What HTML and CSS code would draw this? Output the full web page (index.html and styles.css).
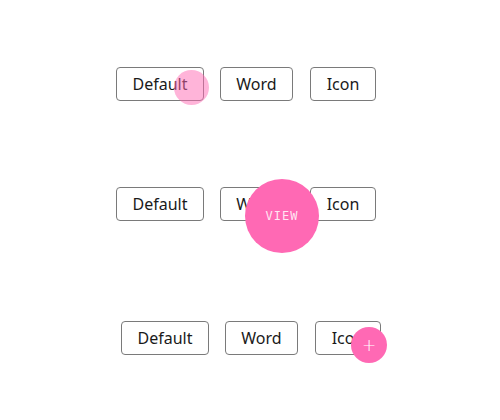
FILE: index.html
```html
<!DOCTYPE html>
<html>
<head>
<meta charset="utf-8">
<link rel="stylesheet" href="styles.css">
</head>
<body>
<div class="page">
  <div class="row row-1">
    <button class="btn btn-default">Default</button>
    <button class="btn btn-word">Word</button>
    <button class="btn btn-icon">Icon</button>
    <span class="ripple"></span>
  </div>
  <div class="row row-2">
    <button class="btn btn-default">Default</button>
    <button class="btn btn-word">Word</button>
    <button class="btn btn-icon">Icon</button>
    <span class="view">VIEW</span>
  </div>
  <div class="row row-3">
    <button class="btn btn-default">Default</button>
    <button class="btn btn-word">Word</button>
    <button class="btn btn-icon">Icon</button>
    <span class="fab">+</span>
  </div>
</div>
</body>
</html>
```
FILE: styles.css
```css
html, body {
  margin: 0;
  padding: 0;
  background: #ffffff;
}
.page {
  width: 500px;
  height: 420px;
  padding-top: 67px;
  box-sizing: border-box;
  font-family: "Noto Sans", "Open Sans", sans-serif;
}
.row {
  position: relative;
  display: flex;
  gap: 16px;
  height: 34px;
}
.row-1 { padding-left: 116px; }
.row-2 { padding-left: 116px; margin-top: 86px; }
.row-3 { padding-left: 121px; margin-top: 100px; }
.btn {
  height: 34px;
  box-sizing: border-box;
  border: 1px solid #7a7a7a;
  border-radius: 4px;
  background: #fff;
  color: #1a1a1a;
  font-family: inherit;
  font-size: 16px;
  padding: 1px 0 0;
  line-height: 31px;
  margin: 0;
  text-align: center;
}
.btn-default { width: 88px; }
.btn-word { width: 73px; margin-left: 0; }
.btn-icon { width: 66px; margin-left: 1px; }
.ripple {
  position: absolute;
  left: 174px;
  top: 3px;
  width: 35px;
  height: 35px;
  border-radius: 50%;
  background: rgba(255, 105, 180, 0.5);
}
.view {
  position: absolute;
  left: 245px;
  top: -8px;
  width: 74px;
  height: 74px;
  border-radius: 50%;
  background: #ff69b4;
  color: rgba(255, 255, 255, 0.85);
  font-family: "DejaVu Sans Mono", monospace;
  font-size: 12px;
  letter-spacing: 1px;
  display: flex;
  align-items: center;
  justify-content: center;
}
.fab {
  position: absolute;
  left: 351px;
  top: 6px;
  width: 36px;
  height: 36px;
  border-radius: 50%;
  background: #ff69b4;
  color: #fff;
  font-family: "DejaVu Sans", sans-serif;
  font-size: 17px;
  font-weight: 200;
  display: flex;
  align-items: center;
  justify-content: center;
}
```
